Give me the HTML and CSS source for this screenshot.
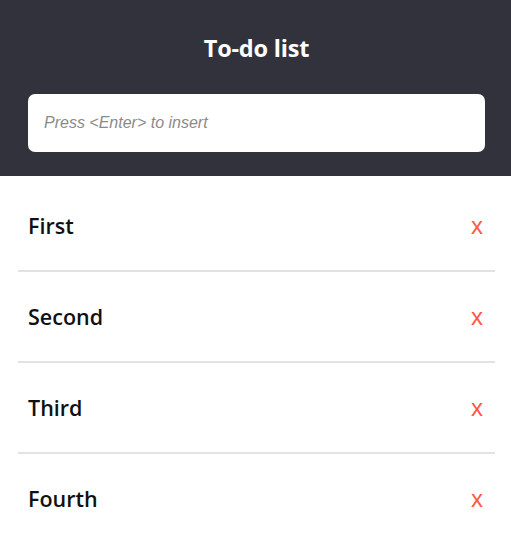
FILE: index.html
```html
<!DOCTYPE html>
<html>
<head>
<meta charset="utf-8">
<link rel="stylesheet" href="styles.css">
</head>
<body>
<header class="top">
  <h1 class="title">To-do list</h1>
  <input class="entry" type="text" placeholder="Press <Enter> to insert">
</header>
<ul class="list">
  <li class="item"><span class="label">First</span><span class="del">x</span></li>
  <li class="item"><span class="label">Second</span><span class="del">x</span></li>
  <li class="item"><span class="label">Third</span><span class="del">x</span></li>
  <li class="item"><span class="label">Fourth</span><span class="del">x</span></li>
</ul>
</body>
</html>
```
FILE: styles.css
```css
html, body { margin: 0; padding: 0; background: #fff; }
body { font-family: "Open Sans", "Noto Sans", sans-serif; }
.top {
  background: #32323d;
  height: 176px;
  box-sizing: border-box;
  padding: 32px 26px 0 28px;
}
.title {
  margin: 0;
  text-align: center;
  color: #fff;
  font-size: 23.5px;
  font-weight: 700;
  line-height: 32px;
  letter-spacing: -0.2px;
}
.entry {
  display: block;
  margin-top: 30px;
  width: 100%;
  height: 58px;
  box-sizing: border-box;
  border: none;
  border-radius: 7px;
  padding: 0 16px;
  font-family: "Liberation Sans", Arial, sans-serif;
  font-size: 16px;
  font-style: italic;
  outline: none;
}
.entry::placeholder { color: #8a8a8a; }
.list { list-style: none; margin: 0; padding: 5px 16px 0 18px; }
.item {
  display: flex;
  align-items: center;
  justify-content: space-between;
  height: 89px;
  padding: 0 12px 0 10px;
  border-bottom: 2px solid #e2e2e2;
}
.item:last-child { border-bottom: none; }
.label {
  font-size: 21.5px;
  font-weight: 600;
  color: #111;
}
.del {
  font-family: "Liberation Sans", Arial, sans-serif;
  font-size: 24px;
  color: #ff5a40;
}
```
